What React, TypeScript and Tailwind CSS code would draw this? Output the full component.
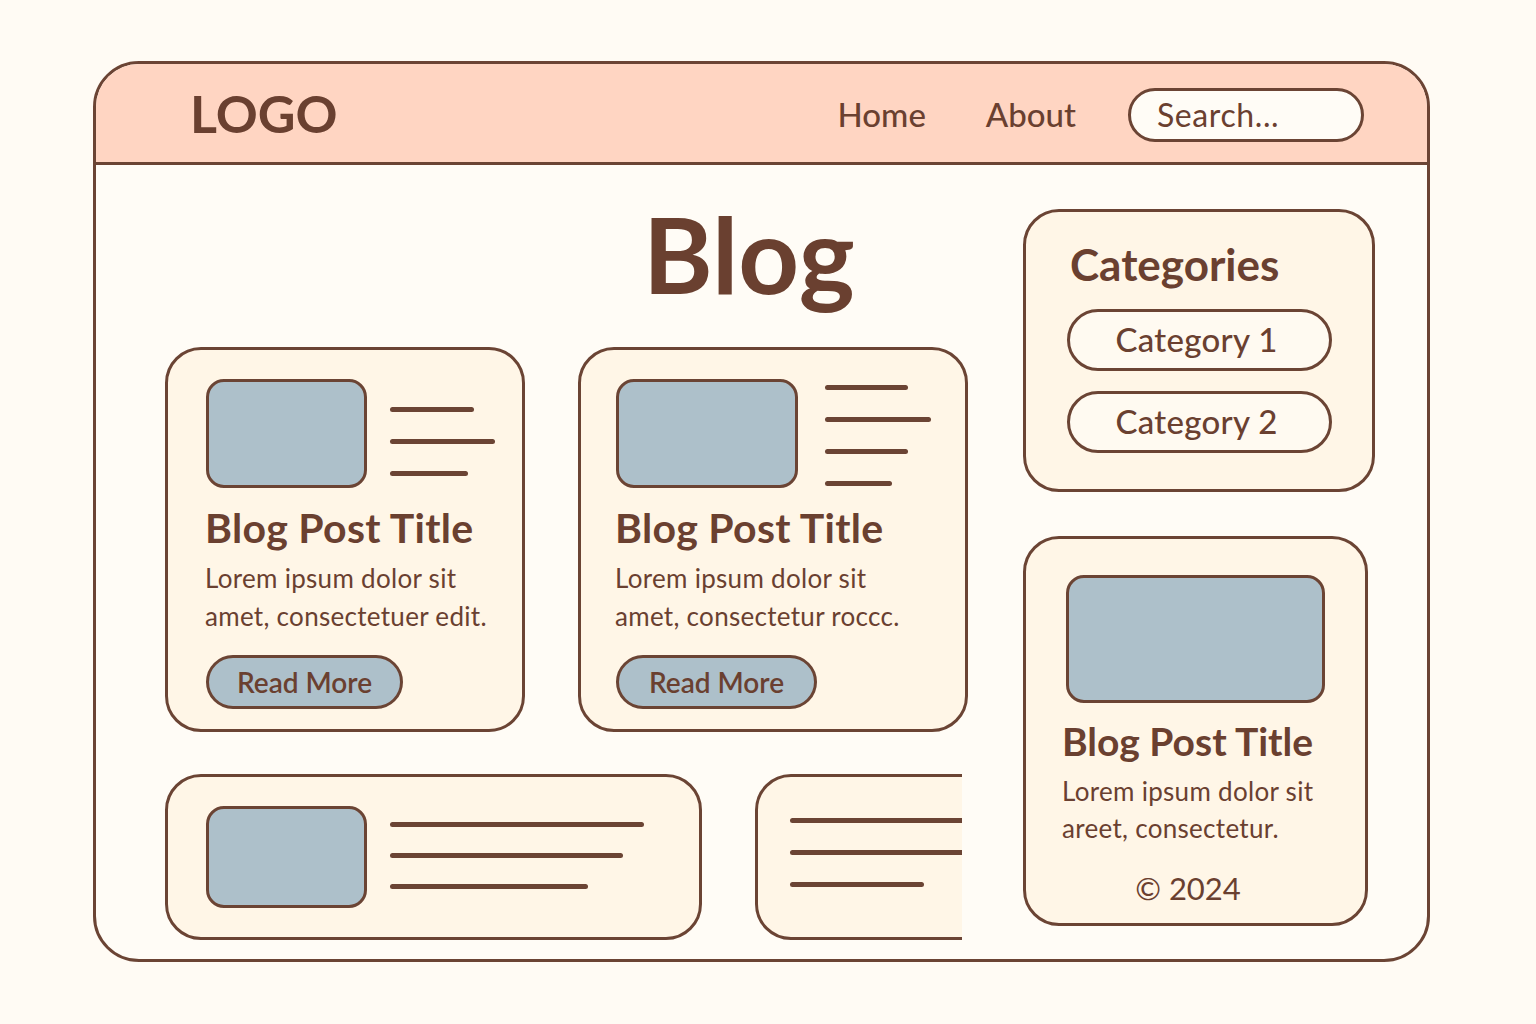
const ink = 'text-[#6a4030]';

function Lines({ widths, top, gap }: { widths: number[]; top: string; gap: string }) {
  return (
    <div className={`flex flex-col ${top} ${gap}`}>
      {widths.map((w, i) => (
        <div key={i} className="h-[5px] rounded-full bg-[#6b4434]" style={{ width: w }} />
      ))}
    </div>
  );
}

function PostCard({
  width,
  pl,
  imgW,
  linesGap,
  lines,
  linesTop,
  text,
  btnW,
}: {
  width: string;
  pl: string;
  imgW: string;
  linesGap: string;
  lines: number[];
  linesTop: string;
  text: [string, string];
  btnW: string;
}) {
  return (
    <div className={`${width} h-[385px] rounded-[36px] border-[3px] border-[#6b4434] bg-[#fff6e7] pt-[29px] ${pl}`}>
      <div className="flex">
        <div className={`${imgW} h-[109px] rounded-[18px] border-[3px] border-[#6b4434] bg-[#adc0ca]`} />
        <div className={linesGap}>
          <Lines widths={lines} top={linesTop} gap="gap-[27px]" />
        </div>
      </div>
      <h2 className={`mt-[19px] -ml-[1px] text-[41px] leading-none font-bold tracking-[0.3px] ${ink}`}>Blog Post Title</h2>
      <p className={`mt-[11px] -ml-[1px] text-[26px] leading-[38px] tracking-[0.3px] ${ink}`}>
        {text[0]}
        <br />
        {text[1]}
      </p>
      <button
        className={`mt-[20px] ${btnW} h-[54px] rounded-full border-[3px] border-[#6b4434] bg-[#adc0ca] text-[28px] font-semibold ${ink}`}
      >
        Read More
      </button>
    </div>
  );
}

export default function App() {
  return (
    <div className="w-[1536px] h-[1024px] overflow-hidden bg-[#fffbf4] pt-[61px] pl-[93px]" style={{ fontFamily: 'Lato, "Noto Sans", sans-serif' }}>
      <div className="w-[1337px] h-[901px] rounded-[46px] border-[3px] border-[#6b4434] bg-[#fffcf6] overflow-hidden flex flex-col">
        {/* header */}
        <header className="h-[101px] shrink-0 bg-[#ffd5c2] border-b-[3px] border-[#6b4434] flex items-center pl-[96px] pr-[63px]">
          <div className={`-ml-[2px] text-[52px] leading-none font-bold ${ink}`}>LOGO</div>
          <nav className="ml-auto mt-[4px] flex items-center">
            <a className={`text-[33px] font-medium ${ink}`}>Home</a>
            <a className={`ml-[60px] text-[33px] font-medium ${ink}`}>About</a>
            <div className="ml-[52px] w-[236px] h-[54px] rounded-full border-[3px] border-[#6b4434] bg-[#fffcf6] flex items-center pl-[26px]">
              <span className={`text-[32px] tracking-[0.6px] ${ink}`}>Search...</span>
            </div>
          </nav>
        </header>

        {/* body */}
        <div className="flex-1 flex pl-[69px]">
          <div className="w-[803px] pt-[35px]">
            <h1 className={`ml-[478px] text-[106px] leading-none font-bold ${ink}`}>Blog</h1>

            <div className="mt-[41px] flex gap-[53px]">
              <PostCard
                width="w-[360px]"
                pl="pl-[38px]"
                imgW="w-[161px]"
                linesGap="ml-[23px]"
                lines={[84, 105, 78]}
                linesTop="pt-[28px]"
                text={['Lorem ipsum dolor sit', 'amet, consectetuer edit.']}
                btnW="w-[197px]"
              />
              <PostCard
                width="w-[390px]"
                pl="pl-[35px]"
                imgW="w-[182px]"
                linesGap="ml-[27px]"
                lines={[83, 106, 83, 67]}
                linesTop="pt-[6px]"
                text={['Lorem ipsum dolor sit', 'amet, consectetur roccc.']}
                btnW="w-[201px]"
              />
            </div>

            <div className="mt-[42px] flex gap-[53px]">
              <div className="w-[537px] h-[166px] rounded-[36px] border-[3px] border-[#6b4434] bg-[#fff6e7] pt-[29px] pl-[38px] flex">
                <div className="w-[161px] h-[102px] rounded-[18px] border-[3px] border-[#6b4434] bg-[#adc0ca]" />
                <div className="ml-[23px]">
                  <Lines widths={[254, 233, 198]} top="pt-[16px]" gap="gap-[26px]" />
                </div>
              </div>
              <div className="w-[207px] h-[166px] overflow-hidden">
                <div className="w-[300px] h-[166px] rounded-[36px] border-[3px] border-[#6b4434] bg-[#fff6e7] pl-[32px]">
                  <Lines widths={[220, 220, 134]} top="pt-[41px]" gap="gap-[27px]" />
                </div>
              </div>
            </div>
          </div>

          {/* sidebar */}
          <aside className="ml-[55px] pt-[44px]">
            <div className="w-[352px] h-[283px] rounded-[36px] border-[3px] border-[#6b4434] bg-[#fff6e7] pt-[30px] pl-[41px]">
              <h3 className={`pl-[3px] text-[44px] leading-none font-bold ${ink}`}>Categories</h3>
              <div className="mt-[23px] flex flex-col gap-[20px]">
                {['Category 1', 'Category 2'].map((c) => (
                  <div
                    key={c}
                    className={`w-[265px] h-[62px] rounded-full border-[3px] border-[#6b4434] bg-[#fffaf1] flex items-center justify-center pr-[6px] text-[33px] font-medium tracking-[0.3px] ${ink}`}
                  >
                    {c}
                  </div>
                ))}
              </div>
            </div>

            <div className="mt-[44px] w-[345px] h-[390px] rounded-[36px] border-[3px] border-[#6b4434] bg-[#fff6e7] pt-[36px] pl-[37px]">
              <div className="ml-[3px] w-[259px] h-[128px] rounded-[18px] border-[3px] border-[#6b4434] bg-[#adc0ca]" />
              <h2 className={`mt-[19px] -ml-[1px] text-[39px] leading-none font-bold ${ink}`}>Blog Post Title</h2>
              <p className={`mt-[12px] -ml-[1px] text-[26px] leading-[37px] tracking-[0.3px] ${ink}`}>
                Lorem ipsum dolor sit
                <br />
                areet, consectetur.
              </p>
              <div className={`mt-[26px] -ml-[52px] text-center text-[31px] leading-none ${ink}`}>© 2024</div>
            </div>
          </aside>
        </div>
      </div>
    </div>
  );
}
